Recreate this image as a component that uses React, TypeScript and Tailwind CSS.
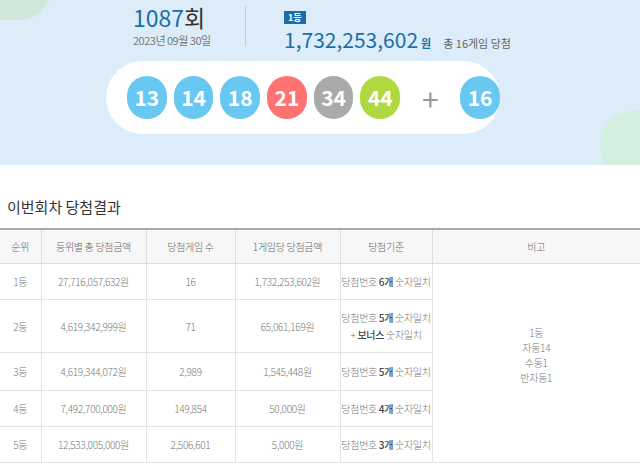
import React from "react"

const F = { fontFamily: '"Noto Sans CJK KR", "Noto Sans", sans-serif' }

const balls = [
  { n: 13, c: "bg-[#69c8f2]" },
  { n: 14, c: "bg-[#69c8f2]" },
  { n: 18, c: "bg-[#69c8f2]" },
  { n: 21, c: "bg-[#ff7272]" },
  { n: 34, c: "bg-[#aaaaaa]" },
  { n: 44, c: "bg-[#b0d840]" },
]

const Ball = ({ n, c }: { n: number; c: string }) => (
  <div className={`w-[43px] h-[43px] rounded-full ${c} flex items-center justify-center text-white text-[21px] font-semibold`}>
    {n}
  </div>
)

const rows = [
  { r: "1등", total: "27,716,057,632원", cnt: "16", per: "1,732,253,602원", k: "6", h: "h-[36px]" },
  { r: "2등", total: "4,619,342,999원", cnt: "71", per: "65,061,169원", k: "5", h: "h-[53px]", bonus: true },
  { r: "3등", total: "4,619,344,072원", cnt: "2,989", per: "1,545,448원", k: "5", h: "h-[38px]" },
  { r: "4등", total: "7,492,700,000원", cnt: "149,854", per: "50,000원", k: "4", h: "h-[36px]" },
  { r: "5등", total: "12,533,005,000원", cnt: "2,506,601", per: "5,000원", k: "3", h: "h-[36px]" },
]

export default function App() {
  return (
    <div className="w-[640px] h-[464px] overflow-hidden bg-white text-[#777]" style={F}>
      <div className="relative h-[165px] bg-[#dcedf9] overflow-hidden">
        <div className="absolute -left-[30px] -top-[40px] w-[80px] h-[60px] rounded-full bg-[#cfe6da]" />
        <div className="absolute -right-[30px] top-[110px] w-[70px] h-[70px] rounded-full bg-[#d4eee0]" />
        <div className="flex pl-[133px] pt-[2px]">
          <div className="w-[112px]">
            <div className="text-[23px] leading-[30px] text-[#1a6fa8]">1087<span className="text-[#333]">회</span></div>
            <div className="text-[11px] text-[#777] -tracking-[0.5px]">2023년 09월 30일</div>
          </div>
          <div className="w-px h-[40px] bg-[#b9cfdf] mt-[4px] mr-[38px]" />
          <div>
            <div className="inline-block bg-[#1a6fa8] text-white text-[9px] font-bold px-[4px] leading-[13px] mt-[6px]">1등</div>
            <div className="flex items-baseline">
              <span className="text-[21px] leading-[26px] text-[#1a6fa8]">1,732,253,602</span>
              <span className="text-[11px] text-[#1a6fa8] font-bold ml-[3px]">원</span>
              <span className="text-[11px] text-[#666] ml-[12px]">총 16게임 당첨</span>
            </div>
          </div>
        </div>
        <div className="ml-[106px] mt-[9px] w-[394px] h-[73px] rounded-full bg-white flex items-center pl-[21px] gap-[7px]">
          {balls.map(b => <Ball key={b.n} {...b} />)}
          <div className="w-[50px] text-center text-[30px] text-[#999] leading-none">+</div>
          <Ball n={16} c="bg-[#69c8f2]" />
        </div>
      </div>
      <div className="px-[7px] pt-[31px] pb-[9px] text-[15px] text-[#333]">이번회차 당첨결과</div>
      <table className="w-full border-collapse text-[10px] text-center table-fixed -tracking-[0.3px] font-light">
        <colgroup>
          <col className="w-[41px]" /><col className="w-[105px]" /><col className="w-[89px]" />
          <col className="w-[105px]" /><col className="w-[92px]" /><col />
        </colgroup>
        <thead>
          <tr className="h-[35px] bg-[#f7f7f7] border-t-2 border-[#aaa]">
            {["순위", "등위별 총 당첨금액", "당첨게임 수", "1게임당 당첨금액", "당첨기준", "비고"].map((t, i) => (
              <th key={t} className={`font-light text-[#666] border-b border-[#ddd] ${i < 5 ? "border-r" : ""}`}>{t}</th>
            ))}
          </tr>
        </thead>
        <tbody>
          {rows.map((r, i) => (
            <tr key={r.r} className={`${r.h} border-b border-[#e4e4e4]`}>
              <td className="border-r border-[#e4e4e4]">{r.r}</td>
              <td className="border-r border-[#e4e4e4]">{r.total}</td>
              <td className="border-r border-[#e4e4e4]">{r.cnt}</td>
              <td className="border-r border-[#e4e4e4]">{r.per}</td>
              <td className="border-r border-[#e4e4e4] leading-[17px]">
                당첨번호 <span className="font-medium text-[#444]">{r.k}개</span> 숫자일치
                {r.bonus && <><br />+ <span className="font-medium text-[#444]">보너스</span> 숫자일치</>}
              </td>
              {i === 0 && (
                <td rowSpan={5} className="leading-[15px] align-middle pb-[16px]">
                  1등<br />자동14<br />수동1<br />반자동1
                </td>
              )}
            </tr>
          ))}
        </tbody>
      </table>
    </div>
  )
}
